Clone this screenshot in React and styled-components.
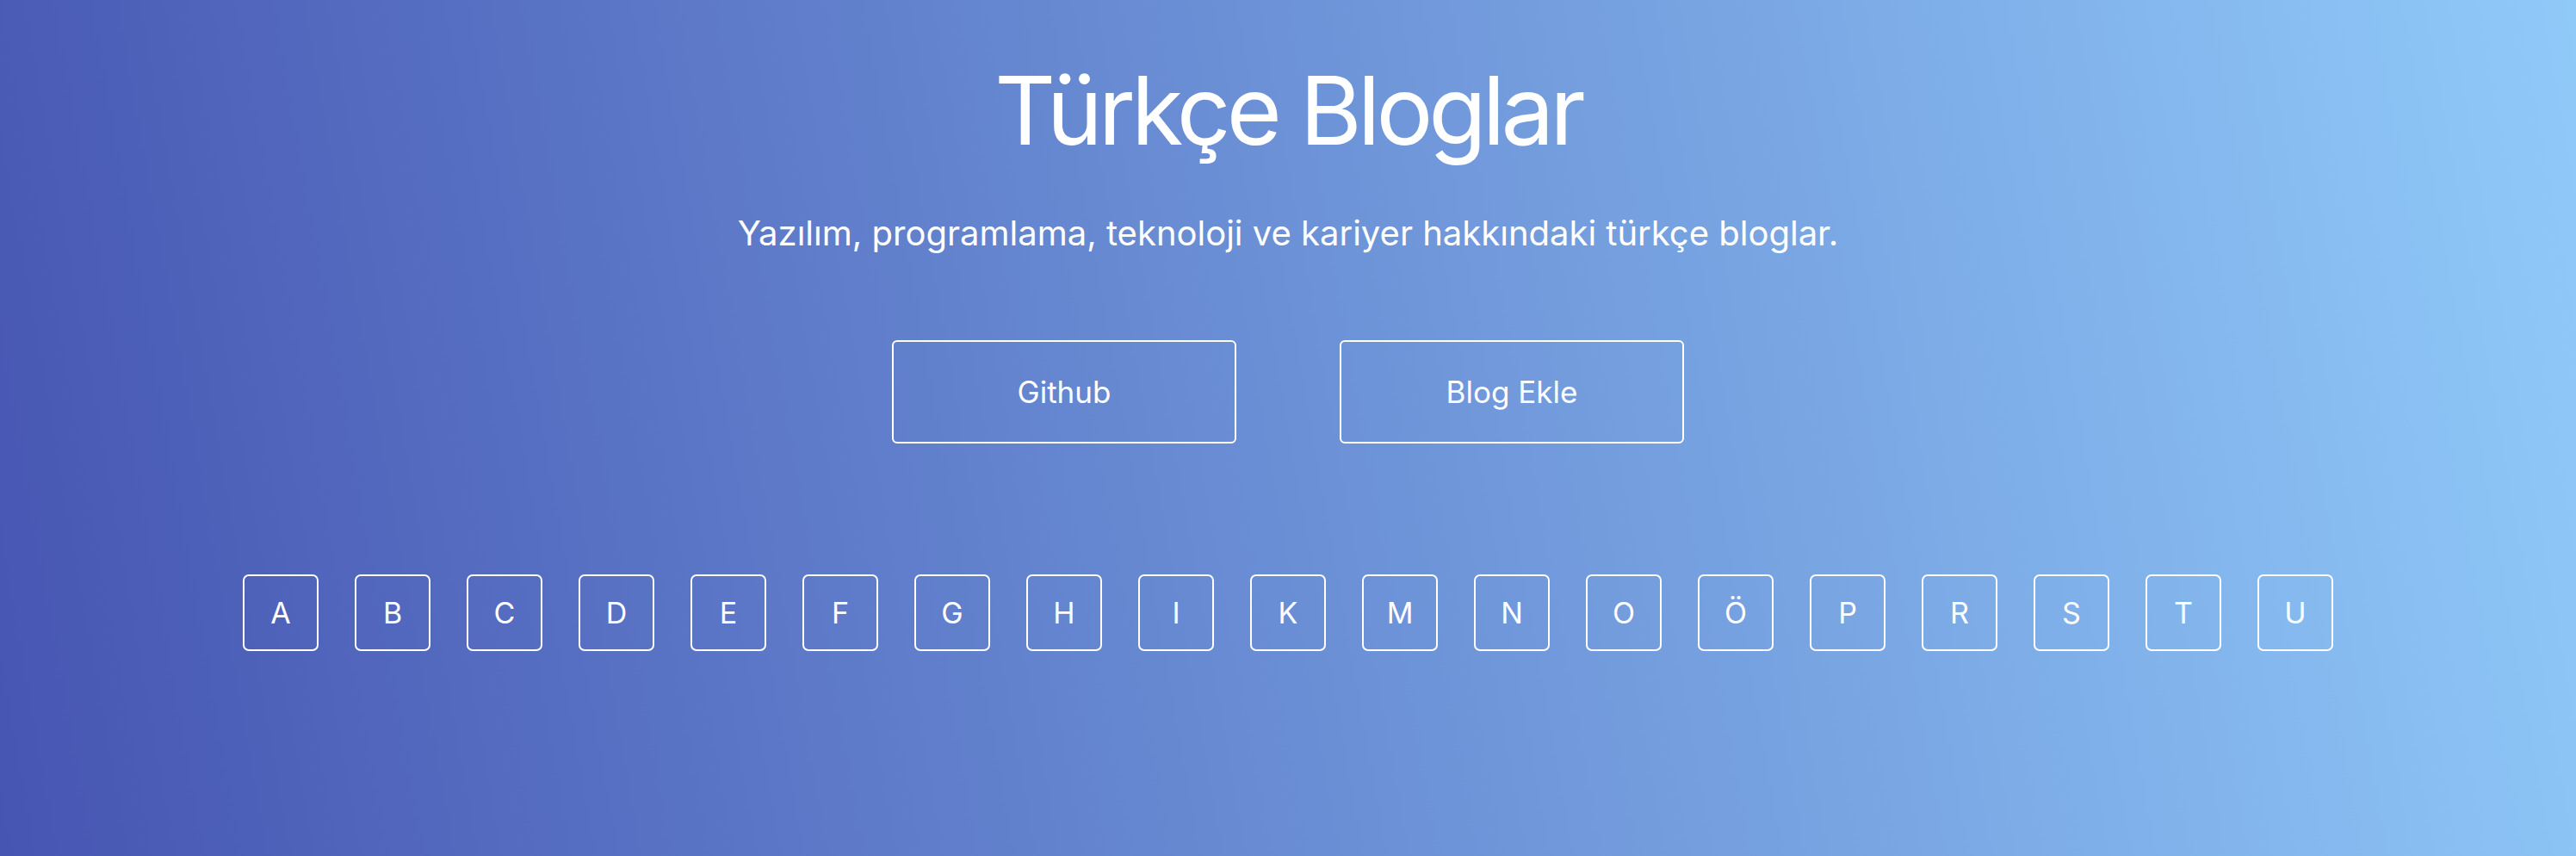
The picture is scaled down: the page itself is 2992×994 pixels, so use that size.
import styled, { createGlobalStyle } from 'styled-components';

const GlobalStyle = createGlobalStyle`
  html, body {
    margin: 0;
    padding: 0;
  }
  body {
    font-family: Inter, "Noto Sans", sans-serif;
    color: white;
  }
`;

const Page = styled.div`
  min-height: 100vh;
  background: linear-gradient(80deg, #4655b2, #90caf9);
  display: flex;
  flex-direction: column;
  align-items: center;
  padding-top: 62px;
  box-sizing: border-box;
`;

const Title = styled.h1`
  margin: 0;
  font-size: 110px;
  font-weight: 400;
  line-height: 1.2;
  letter-spacing: -5px;
`;

const Subtitle = styled.p`
  margin: 52px 0 0;
  font-size: 40px;
  font-weight: 400;
`;

const Buttons = styled.div`
  display: flex;
  gap: 120px;
  margin-top: 100px;
`;

const LinkButton = styled.a`
  display: flex;
  align-items: center;
  justify-content: center;
  width: 400px;
  height: 120px;
  box-sizing: border-box;
  border: 2px solid white;
  border-radius: 6px;
  color: white;
  font-size: 35px;
  text-decoration: none;
  cursor: pointer;
`;

const Letters = styled.div`
  display: flex;
  gap: 42px;
  margin-top: 152px;
`;

const Letter = styled.a`
  display: flex;
  align-items: center;
  justify-content: center;
  width: 88px;
  height: 89px;
  box-sizing: border-box;
  border: 2px solid white;
  border-radius: 7px;
  color: white;
  font-size: 34px;
  text-decoration: none;
`;

const letters = ['A', 'B', 'C', 'D', 'E', 'F', 'G', 'H', 'I', 'K', 'M', 'N', 'O', 'Ö', 'P', 'R', 'S', 'T', 'U'];

export default function App() {
  return (
    <>
      <GlobalStyle />
      <Page>
        <Title>Türkçe Bloglar</Title>
        <Subtitle>Yazılım, programlama, teknoloji ve kariyer hakkındaki türkçe bloglar.</Subtitle>
        <Buttons>
          <LinkButton>Github</LinkButton>
          <LinkButton>Blog Ekle</LinkButton>
        </Buttons>
        <Letters>
          {letters.map((l) => (
            <Letter key={l}>{l}</Letter>
          ))}
        </Letters>
      </Page>
    </>
  );
}
